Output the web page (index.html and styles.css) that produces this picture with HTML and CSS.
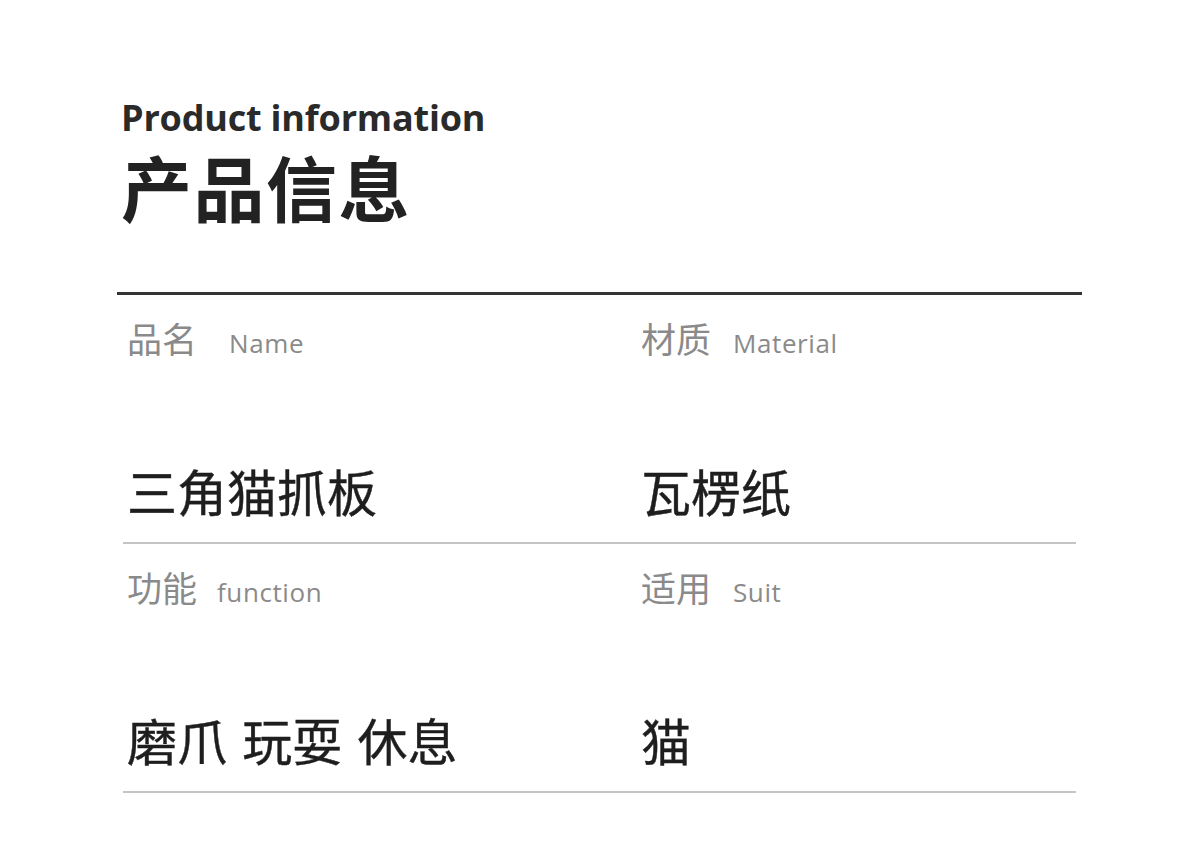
FILE: index.html
```html
<!DOCTYPE html>
<html lang="zh-CN">
<head>
<meta charset="utf-8">
<title>Product information</title>
<link rel="stylesheet" href="styles.css">
</head>
<body>
<main class="page">
  <header class="head">
    <div class="en-title">Product information</div>
    <h1 class="cn-title">产品信息</h1>
  </header>
  <div class="rule"></div>
  <section class="table">
    <div class="row">
      <div class="cell">
        <div class="label"><span class="lab-cn">品名</span><span class="lab-en">Name</span></div>
        <div class="value">三角猫抓板</div>
      </div>
      <div class="cell">
        <div class="label"><span class="lab-cn">材质</span><span class="lab-en">Material</span></div>
        <div class="value">瓦楞纸</div>
      </div>
    </div>
    <div class="row">
      <div class="cell">
        <div class="label"><span class="lab-cn">功能</span><span class="lab-en">function</span></div>
        <div class="value">磨爪 玩耍 休息</div>
      </div>
      <div class="cell">
        <div class="label"><span class="lab-cn">适用</span><span class="lab-en">Suit</span></div>
        <div class="value">猫</div>
      </div>
    </div>
  </section>
</main>
</body>
</html>
```

FILE: styles.css
```css
html, body {
  margin: 0;
  padding: 0;
  background: #ffffff;
}
body {
  font-family: "Open Sans", "Noto Sans CJK SC", sans-serif;
  color: #222;
}
.page {
  width: 965px;
  margin-left: 117px;
  padding-top: 95px;
}
.head {
  padding-left: 4px;
}
.en-title {
  font-family: "Open Sans", sans-serif;
  font-weight: 700;
  font-size: 36px;
  line-height: 45px;
  color: #2a2a2a;
  letter-spacing: -0.2px;
}
.cn-title {
  margin: 0;
  font-family: "Noto Sans CJK SC", sans-serif;
  font-weight: 700;
  font-size: 71px;
  line-height: 90px;
  color: #222;
  letter-spacing: 1.5px;
}
.rule {
  margin-top: 62px;
  height: 3px;
  background: #333;
}
.table {
  padding: 0 6px;
}
.row {
  display: grid;
  grid-template-columns: 518px 1fr;
  border-bottom: 2px solid #c4c4c4;
  height: 249px;
  box-sizing: border-box;
}
.cell {
  display: flex;
  flex-direction: column;
  padding-top: 18px;
}
.cell:first-child {
  padding-left: 4px;
}
.label {
  display: flex;
  align-items: baseline;
  gap: 32px;
  color: #8a8a8a;
  height: 50px;
}
.row + .row .label { gap: 20px; }
.row .cell:nth-child(2) .label { gap: 22px; }
.lab-cn {
  font-family: "Noto Sans CJK SC", sans-serif;
  font-size: 35px;
  line-height: 50px;
}
.lab-en {
  font-family: "Open Sans", sans-serif;
  font-size: 26px;
  letter-spacing: 0.6px;
}
.value {
  margin-top: 97px;
  font-family: "Noto Sans CJK SC", sans-serif;
  font-weight: 400;
  font-size: 50px;
  line-height: 60px;
  color: #1e1e1e;
  -webkit-text-stroke: 0.4px #1e1e1e;
  word-spacing: 4px;
}
```
